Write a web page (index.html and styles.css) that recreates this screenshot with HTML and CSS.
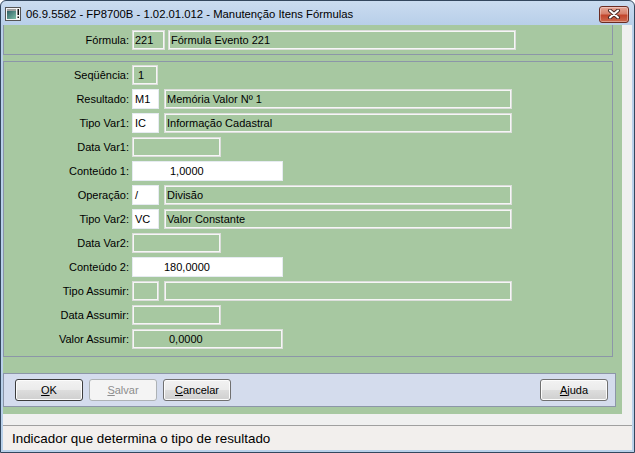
FILE: index.html
```html
<!DOCTYPE html>
<html lang="pt">
<head>
    <meta charset="UTF-8">
    <meta name="viewport" content="width=device-width, initial-scale=1.0">
    <title>Manutenção Itens Fórmulas</title>
    <link rel="stylesheet" href="styles.css">
</head>
<body>
    <div class="window">
        <!-- Title bar -->
        <div class="titlebar">
            <svg class="app-icon" width="16" height="14" viewBox="0 0 16 14">
                <defs>
                    <linearGradient id="scr" x1="0" y1="0" x2="1" y2="1">
                        <stop offset="0" stop-color="#2f5f66"/>
                        <stop offset="1" stop-color="#7fbfa8"/>
                    </linearGradient>
                </defs>
                <rect x="0.5" y="0.5" width="15" height="13" fill="#f4f4f4" stroke="#555"/>
                <rect x="2" y="2" width="9" height="2" fill="#a0a0a0"/>
                <rect x="2" y="4" width="9" height="8" fill="url(#scr)"/>
                <rect x="12.5" y="2" width="1.5" height="6" fill="#111"/>
                <rect x="12.5" y="9.5" width="1.5" height="1.5" fill="#111"/>
            </svg>
            <span class="title">06.9.5582 - FP8700B - 1.02.01.012 - Manutenção Itens Fórmulas</span>
            <div class="close">
                <svg width="14" height="10" viewBox="0 0 14 10">
                    <path d="M3 1.5 L11 8.5 M11 1.5 L3 8.5" stroke="#4a2a26" stroke-width="4" stroke-linecap="round"/>
                    <path d="M3 1.5 L11 8.5 M11 1.5 L3 8.5" stroke="#fff" stroke-width="2" stroke-linecap="round"/>
                </svg>
            </div>
        </div>

        <div class="client">
            <div class="form">
                <!-- Header -->
                <div class="panel head">
                    <span class="lbl">Fórmula:</span>
                    <div class="fld ro code-wide">221</div>
                    <div class="fld ro desc desc-head">Fórmula Evento 221</div>
                </div>

                <!-- Item fields -->
                <div class="panel main">
                    <div class="row">
                        <span class="lbl">Seqüência:</span>
                        <div class="fld ro code seq">1</div>
                    </div>
                    <div class="row">
                        <span class="lbl">Resultado:</span>
                        <div class="fld ed code">M1</div>
                        <div class="fld ro desc">Memória Valor Nº 1</div>
                    </div>
                    <div class="row">
                        <span class="lbl">Tipo Var1:</span>
                        <div class="fld ed code">IC</div>
                        <div class="fld ro desc">Informação Cadastral</div>
                    </div>
                    <div class="row">
                        <span class="lbl">Data Var1:</span>
                        <div class="fld ro date"></div>
                    </div>
                    <div class="row">
                        <span class="lbl">Conteúdo 1:</span>
                        <div class="fld ed num num-1">1,0000</div>
                    </div>
                    <div class="row">
                        <span class="lbl">Operação:</span>
                        <div class="fld ed code">/</div>
                        <div class="fld ro desc">Divisão</div>
                    </div>
                    <div class="row">
                        <span class="lbl">Tipo Var2:</span>
                        <div class="fld ed code">VC</div>
                        <div class="fld ro desc">Valor Constante</div>
                    </div>
                    <div class="row">
                        <span class="lbl">Data Var2:</span>
                        <div class="fld ro date"></div>
                    </div>
                    <div class="row">
                        <span class="lbl">Conteúdo 2:</span>
                        <div class="fld ed num num-2">180,0000</div>
                    </div>
                    <div class="row">
                        <span class="lbl">Tipo Assumir:</span>
                        <div class="fld ro code"></div>
                        <div class="fld ro desc"></div>
                    </div>
                    <div class="row">
                        <span class="lbl">Data Assumir:</span>
                        <div class="fld ro date"></div>
                    </div>
                    <div class="row">
                        <span class="lbl">Valor Assumir:</span>
                        <div class="fld ro num num-3">0,0000</div>
                    </div>
                </div>

                <!-- Buttons -->
                <div class="bar">
                    <button class="btn default"><u>O</u>K</button>
                    <button class="btn" disabled><u>S</u>alvar</button>
                    <button class="btn"><u>C</u>ancelar</button>
                    <button class="btn help"><u>A</u>juda</button>
                </div>
            </div>

            <div class="status">Indicador que determina o tipo de resultado</div>
        </div>
    </div>
</body>
</html>
```

FILE: styles.css
```css
* {
    box-sizing: border-box;
    margin: 0;
    padding: 0;
}
body {
    width: 635px;
    height: 453px;
    overflow: hidden;
    background-color: #fff;
    font-family: "Liberation Sans", Arial, sans-serif;
    font-size: 11px;
    color: #000;
}
.window {
    display: flex;
    flex-direction: column;
    width: 635px;
    height: 453px;
    padding: 0 2px 2px 2px;
    border: 1px solid #33475e;
    border-radius: 6px 6px 0 0;
    background: linear-gradient(to bottom, #cadcf0 0, #b8cfe9 24px, #b9d1ea 100%);
}

/* Title bar */
.titlebar {
    display: flex;
    align-items: center;
    height: 24px;
    margin: 0 -2px;
    padding: 0 5px 0 4px;
}
.app-icon {
    flex-shrink: 0;
    margin-top: 2px;
}
.title {
    margin-left: 5px;
    margin-top: 1px;
    font-size: 11.3px;
    color: #000;
    white-space: nowrap;
}
.close {
    display: flex;
    align-items: center;
    justify-content: center;
    width: 30px;
    height: 17px;
    margin-left: auto;
    margin-top: 2px;
    border: 1px solid #6b2c22;
    border-radius: 3px;
    background: linear-gradient(to bottom, #e5a797 0%, #d7816c 45%, #c2452c 55%, #cd6a4f 100%);
    box-shadow: inset 0 0 0 1px rgba(255, 255, 255, 0.35);
}

/* Client area */
.client {
    display: flex;
    flex-direction: column;
    flex: 1;
    background-color: #f0f0f0;
}
.form {
    display: flex;
    flex-direction: column;
    width: 619px;
    height: 389px;
    background-color: #a7c8a1;
}
.panel {
    width: 610px;
    border: 1px solid #8c96a8;
}
.panel.head {
    display: flex;
    align-items: center;
    height: 30px;
    border-top: none;
}
.panel.main {
    display: flex;
    flex-direction: column;
    gap: 4px;
    height: 296px;
    margin-top: 6px;
    padding-top: 3px;
}
.row {
    display: flex;
    align-items: center;
    height: 20px;
}
.lbl {
    width: 125px;
    margin-right: 3px;
    text-align: right;
    white-space: nowrap;
}

/* Fields */
.fld {
    display: flex;
    align-items: center;
    height: 20px;
    padding-left: 2px;
    white-space: nowrap;
}
.fld.ro {
    border: 1px solid #dcdedb;
    box-shadow: inset 0 0 0 1px #f6f6f6;
}
.fld.ed {
    border: 1px solid #e6ebf1;
    background-color: #fff;
}
.code {
    width: 27px;
}
.code-wide {
    width: 33px;
}
.seq {
    width: 26px;
    padding-left: 5px;
}
.desc {
    width: 348px;
    margin-left: 5px;
}
.desc-head {
    margin-left: 3px;
}
.date {
    width: 89px;
}
.num {
    width: 151px;
}
.num-1 {
    padding-left: 37px;
}
.num-2 {
    padding-left: 31px;
}
.num-3 {
    padding-left: 36px;
}

/* Button bar */
.bar {
    display: flex;
    align-items: center;
    gap: 6px;
    width: 613px;
    height: 34px;
    margin-top: 16px;
    padding: 0 7px 0 11px;
    border: 1px solid #8c96a8;
    background-color: #d4dced;
}
.btn {
    width: 68px;
    height: 22px;
    border: 1px solid #707070;
    border-radius: 3px;
    background: linear-gradient(to bottom, #f2f2f2 0%, #ebebeb 50%, #dddddd 51%, #cfcfcf 100%);
    box-shadow: inset 0 0 0 1px #fcfcfc;
    font-family: "Liberation Sans", Arial, sans-serif;
    font-size: 11px;
    color: #000;
}
.btn.default {
    border-color: #3c3c3c;
}
.btn:disabled {
    border-color: #adb2b5;
    background: #f4f4f4;
    box-shadow: none;
    color: #8d8d8d;
}
.btn.help {
    margin-left: auto;
}

/* Status bar */
.status {
    display: flex;
    align-items: center;
    height: 25px;
    margin-top: 11px;
    padding-left: 9px;
    border-top: 1px solid #a0a0a0;
    background-color: #f2efed;
    font-size: 13.4px;
}
```
